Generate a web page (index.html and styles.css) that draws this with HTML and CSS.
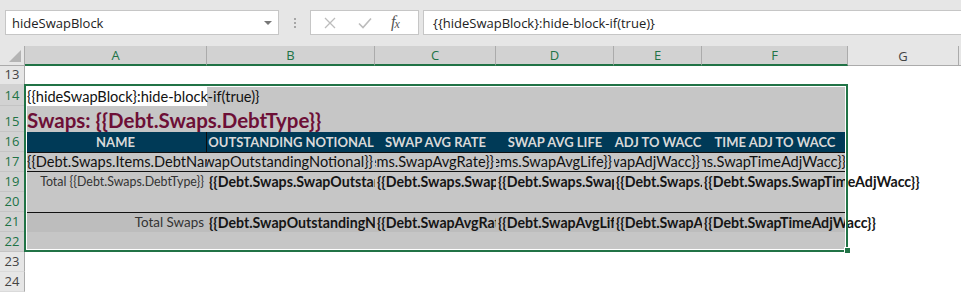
FILE: index.html
```html
<!DOCTYPE html>
<html lang="en">
<head>
  <meta charset="UTF-8">
  <meta name="viewport" content="width=device-width, initial-scale=1.0">
  <title>Swaps template</title>
  <link rel="stylesheet" href="styles.css">
</head>
<body>

    <!-- Formula bar -->
    <div class="formula-bar">
        <div class="name-box">
            <span>hideSwapBlock</span>
            <span class="caret"></span>
        </div>
        <div class="grip"><i></i><i></i><i></i></div>
        <div class="fx-buttons">
            <svg width="12" height="12" viewBox="0 0 12 12"><path d="M1 1 L11 11 M11 1 L1 11" stroke="#bcbcbc" stroke-width="1.3" fill="none"/></svg>
            <svg width="14" height="12" viewBox="0 0 14 12"><path d="M1 6.5 L5 10.5 L13 1.5" stroke="#bcbcbc" stroke-width="1.6" fill="none"/></svg>
            <span class="fx">f<sub>x</sub></span>
        </div>
        <div class="formula-input">{{hideSwapBlock}:hide-block-if(true)}</div>
    </div>

    <!-- Sheet -->
    <div class="sheet">

        <div class="row head-row">
            <div class="corner"><span class="tri"></span></div>
            <div class="col-head sel">A</div>
            <div class="col-head sel">B</div>
            <div class="col-head sel">C</div>
            <div class="col-head sel">D</div>
            <div class="col-head sel">E</div>
            <div class="col-head sel">F</div>
            <div class="col-head">G</div>
            <div class="col-head rest"></div>
        </div>

        <div class="row r13">
            <div class="row-head">13</div>
        </div>

        <div class="row r14">
            <div class="row-head sel">14</div>
            <div class="c active over">{{hideSwapBlock}:hide-block-if(true)}</div>
            <div class="c fill"></div>
            <div class="c fill"></div>
            <div class="c fill"></div>
            <div class="c fill"></div>
            <div class="c fill"></div>
        </div>

        <div class="row r15">
            <div class="row-head sel">15</div>
            <div class="c fill over title">Swaps: {{Debt.Swaps.DebtType}}</div>
            <div class="c fill"></div>
            <div class="c fill"></div>
            <div class="c fill"></div>
            <div class="c fill"></div>
            <div class="c fill"></div>
        </div>

        <div class="row r16">
            <div class="row-head sel">16</div>
            <div class="c band split">NAME</div>
            <div class="c band">OUTSTANDING NOTIONAL</div>
            <div class="c band">SWAP AVG RATE</div>
            <div class="c band">SWAP AVG LIFE</div>
            <div class="c band">ADJ TO WACC</div>
            <div class="c band">TIME ADJ TO WACC</div>
        </div>

        <div class="row r17">
            <div class="row-head sel">17</div>
            <div class="c fill lined">{{Debt.Swaps.Items.DebtName}}</div>
            <div class="c fill lined right"><span>{{Debt.Swaps.Items.SwapOutstandingNotional}}</span></div>
            <div class="c fill lined right"><span>{{Debt.Swaps.Items.SwapAvgRate}}</span></div>
            <div class="c fill lined right"><span>{{Debt.Swaps.Items.SwapAvgLife}}</span></div>
            <div class="c fill lined right"><span>{{Debt.Swaps.Items.SwapAdjWacc}}</span></div>
            <div class="c fill lined right"><span>{{Debt.Swaps.Items.SwapTimeAdjWacc}}</span></div>
        </div>

        <div class="row r19">
            <div class="row-head sel">19</div>
            <div class="c fill right small">Total {{Debt.Swaps.DebtType}}</div>
            <div class="c fill bold">{{Debt.Swaps.SwapOutstandingNotional}}</div>
            <div class="c fill bold">{{Debt.Swaps.SwapAvgRate}}</div>
            <div class="c fill bold">{{Debt.Swaps.SwapAvgLife}}</div>
            <div class="c fill bold">{{Debt.Swaps.SwapAdjWacc}}</div>
            <div class="c fill bold over">{{Debt.Swaps.SwapTimeAdjWacc}}</div>
        </div>

        <div class="row r20">
            <div class="row-head sel">20</div>
            <div class="c fill"></div>
            <div class="c fill"></div>
            <div class="c fill"></div>
            <div class="c fill"></div>
            <div class="c fill"></div>
            <div class="c fill"></div>
        </div>

        <div class="row r21">
            <div class="row-head sel">21</div>
            <div class="c dark topline right mid">Total Swaps</div>
            <div class="c dark topline bold">{{Debt.SwapOutstandingNotional}}</div>
            <div class="c dark topline bold">{{Debt.SwapAvgRate}}</div>
            <div class="c dark topline bold">{{Debt.SwapAvgLife}}</div>
            <div class="c dark topline bold">{{Debt.SwapAdjWacc}}</div>
            <div class="c dark topline bold over">{{Debt.SwapTimeAdjWacc}}</div>
        </div>

        <div class="row r22">
            <div class="row-head sel">22</div>
            <div class="c fill"></div>
            <div class="c fill"></div>
            <div class="c fill"></div>
            <div class="c fill"></div>
            <div class="c fill"></div>
            <div class="c fill"></div>
        </div>

        <div class="row r23">
            <div class="row-head">23</div>
        </div>

        <div class="row r24">
            <div class="row-head">24</div>
        </div>

        <!-- selection A14:F22 -->
        <div class="selection"></div>
        <div class="handle"></div>
    </div>

</body>
</html>
```

FILE: styles.css
```css
body {
  margin: 0;
  background: #fff;
  font-family: "Open Sans", "Noto Sans", sans-serif;
  overflow: hidden;
}

/* Formula bar */
.formula-bar {
  height: 46px;
  box-sizing: border-box;
  padding: 10px 0 0 5px;
  background: #e6e6e6;
  display: flex;
  align-items: flex-start;
}

.name-box {
  width: 274px;
  height: 25px;
  box-sizing: border-box;
  background: #fff;
  border: 1px solid #c6c6c6;
  padding: 0 6px;
  display: flex;
  align-items: center;
  justify-content: space-between;
  font-size: 13px;
  color: #222;
}

.caret {
  width: 0;
  height: 0;
  border-left: 4px solid transparent;
  border-right: 4px solid transparent;
  border-top: 4px solid #777;
}

.grip {
  width: 31px;
  height: 25px;
  display: flex;
  flex-direction: column;
  align-items: center;
  justify-content: center;
  gap: 2px;
}

.grip i {
  width: 2px;
  height: 2px;
  background: #a6a6a6;
}

.fx-buttons {
  width: 109px;
  height: 25px;
  box-sizing: border-box;
  background: #fff;
  border: 1px solid #c6c6c6;
  display: flex;
  align-items: center;
  padding-left: 13px;
  gap: 22px;
}

.fx {
  font-family: "Liberation Serif", serif;
  font-style: italic;
  font-size: 16px;
  line-height: 16px;
  color: #555;
  margin-left: -3px;
}

.fx sub {
  font-size: 12px;
  vertical-align: -1px;
  margin-left: -1px;
}

.formula-input {
  flex: 1;
  margin-left: 4px;
  height: 25px;
  box-sizing: border-box;
  background: #fff;
  border: 1px solid #c6c6c6;
  border-right: none;
  padding-left: 9px;
  display: flex;
  align-items: center;
  font-size: 13px;
  color: #222;
}

/* Sheet grid */
.sheet {
  position: relative;
}

.row {
  display: grid;
  grid-template-columns: 25px 182px 168px 121px 118px 88px 146px 111px 1fr;
  height: 20px;
}

.head-row { height: 19px; }
.r13 { height: 19px; }
.r14 { height: 22px; }
.r15 { height: 26px; }

.corner {
  background: #e6e6e6;
  border-right: 1px solid #ababab;
  border-bottom: 1px solid #ababab;
  position: relative;
}

.tri {
  position: absolute;
  right: 3px;
  bottom: 3px;
  width: 0;
  height: 0;
  border-left: 12px solid transparent;
  border-bottom: 12px solid #b4b4b4;
}

.col-head {
  background: #e6e6e6;
  border-right: 1px solid #ababab;
  border-bottom: 1px solid #ababab;
  display: flex;
  align-items: center;
  justify-content: center;
  font-size: 13px;
  color: #444;
}

.col-head.sel {
  background: #d2d2d2;
  color: #217346;
  border-bottom: 2px solid #217346;
}

.col-head.rest {
  border-right: none;
}

.row-head {
  grid-column: 1;
  background: #e6e6e6;
  border-right: 1px solid #ababab;
  border-bottom: 1px solid #dadada;
  display: flex;
  align-items: flex-end;
  justify-content: center;
  padding-bottom: 1px;
  box-sizing: border-box;
  font-size: 13px;
  color: #444;
}

.row-head.sel {
  background: #d2d2d2;
  color: #217346;
  border-bottom-color: #c4c4c4;
}

/* Cells */
.c {
  display: flex;
  align-items: flex-end;
  overflow: hidden;
  white-space: nowrap;
  padding: 0 2px 1px;
  box-sizing: border-box;
  font-family: Lato, "Open Sans", sans-serif;
  font-size: 14.6px;
  color: #111;
}

.fill { background: #c6c6c6; }
.dark { background: #bdbdbd; }

.active {
  background: #fff;
}

/* text spilling into the next cells */
.over {
  overflow: visible;
  position: relative;
  z-index: 1;
}

.title {
  font-size: 20.5px;
  font-weight: bold;
  color: #6d0f36;
  padding-bottom: 0;
}

.band {
  background: #003a57;
  color: #d9d9d9;
  font-weight: bold;
  font-size: 13px;
  justify-content: center;
  align-items: center;
}

.split {
  border-right: 1px solid #0d0d0d;
}

.lined {
  border-top: 1px solid #111;
  border-bottom: 1px solid #111;
  align-items: center;
}

.right {
  justify-content: flex-end;
}

.right span {
  flex-shrink: 0;
}

.small {
  font-size: 12.4px;
  color: #333;
  align-items: center;
  padding-right: 3px;
}

.mid {
  font-size: 13.4px;
  color: #333;
  align-items: center;
  padding-right: 3px;
}

.bold {
  font-weight: bold;
  font-size: 14.2px;
  color: #151515;
  align-items: center;
}

.topline {
  border-top: 1px solid #111;
}

/* Selection box over A14:F22 */
.selection {
  position: absolute;
  left: 24px;
  top: 38px;
  width: 824px;
  height: 168px;
  box-sizing: border-box;
  border: 2px solid #217346;
  box-shadow: inset 0 0 0 1px #fff;
  pointer-events: none;
  z-index: 2;
}

.handle {
  position: absolute;
  left: 845px;
  top: 202px;
  width: 5px;
  height: 5px;
  background: #217346;
  outline: 1px solid #fff;
  z-index: 3;
}
```
